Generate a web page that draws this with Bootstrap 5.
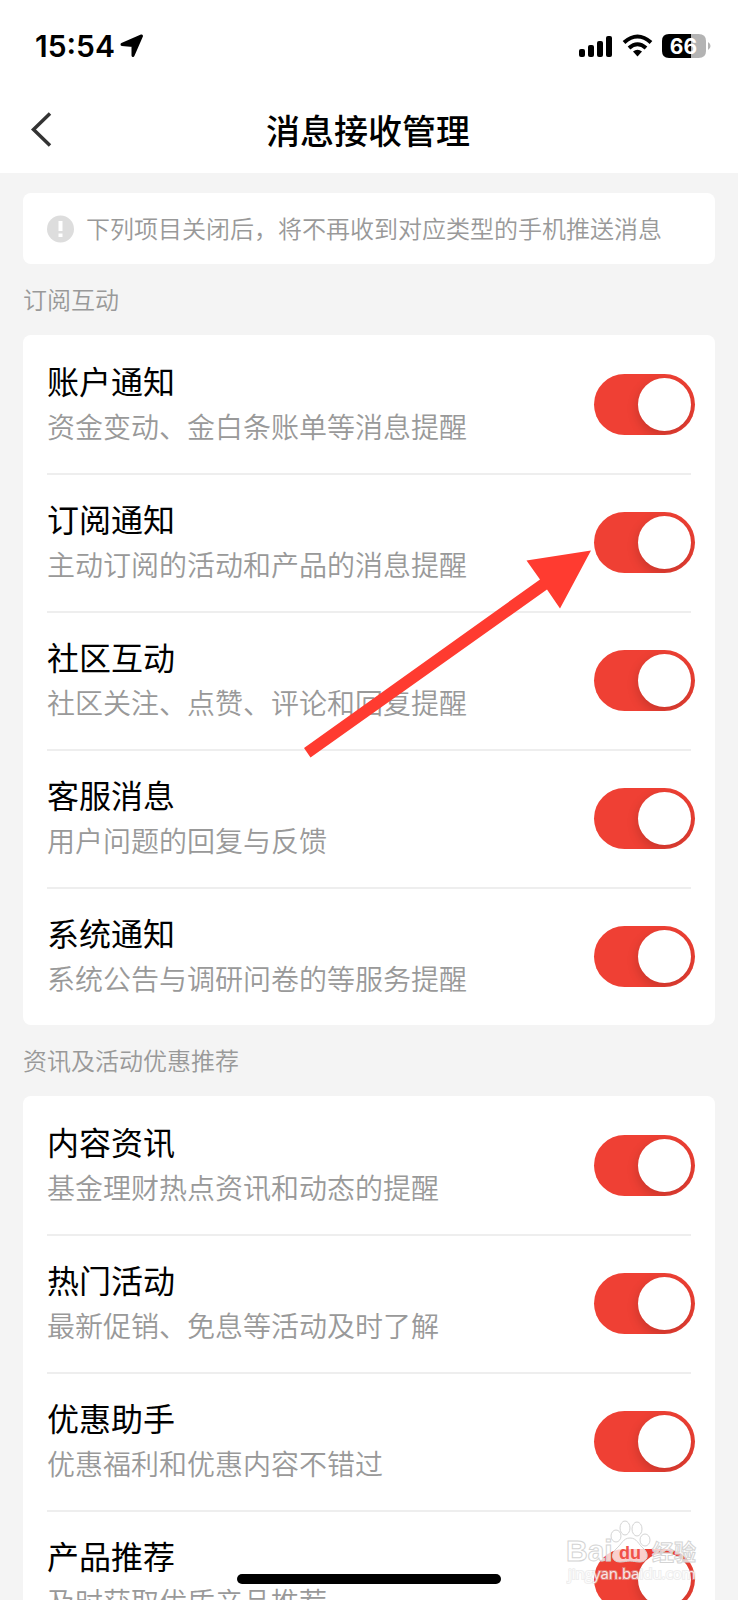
<!DOCTYPE html>
<html lang="zh-CN">
<head>
<meta charset="utf-8">
<meta name="viewport" content="width=device-width, initial-scale=1">
<title>消息接收管理</title>
<link href="https://cdn.jsdelivr.net/npm/bootstrap@5.3.0/dist/css/bootstrap.min.css" rel="stylesheet">
<style>
  body { font-family: "Noto Sans CJK SC", sans-serif; background: #f4f4f4; color: #000; }
  .status-bar { height: 88px; padding: 3px 27px 0 35px; font-family: Inter, sans-serif; font-weight: 600; }
  .clock { font-size: 30px; line-height: 32px; }
  .nav-row { height: 85px; padding: 0 29px 2px; }
  .nav-heading { font-size: 34px; line-height: 83px; font-weight: 500; }
  .nav-spacer { width: 28px; }
  .settings-scroll { padding: 20px 23px 0; min-height: 0; overflow-y: auto; scrollbar-width: none; }
  .settings-scroll::-webkit-scrollbar { display: none; }
  .panel { background: #fff; border-radius: 8px; }
  .hint { min-height: 71px; padding: 0 24px; font-size: 24px; line-height: 32px; color: #999; }
  .hint span { padding-bottom: 2px; }
  .group-label { font-size: 24px; line-height: 69px; padding-bottom: 2px; color: #999; }
  .setting { min-height: 138px; margin: 0 24px; }
  .setting + .setting { border-top: 2px solid #eee; padding-bottom: 2px; }
  .setting label { padding-bottom: 2px; }
  .setting-name { font-size: 32px; line-height: 46px; }
  .setting-note { font-size: 28px; line-height: 46px; color: #999; }
  .hint, .group-label, .setting-note { font-weight: 350; }
  .form-check-input.toggle { width: 101px; height: 61px; margin: 0 -4px 0 0; border: 0; border-radius: 31px; background: #ccc; overflow: hidden; position: relative; }
  .form-check-input.toggle:checked { background: #ef4034; }
  .toggle::before { content: ""; position: absolute; top: 4px; left: 4px; width: 53px; height: 53px; border-radius: 50%; background: #fff; box-shadow: 0 4px 12px rgba(0,0,0,.18); }
  .toggle:checked::before { left: auto; right: 4px; }
  .pointer-arrow { position: absolute; top: 215px; right: 124px; pointer-events: none; }
  .home-bar { position: absolute; bottom: 16px; left: 50%; width: 264px; height: 10px; margin-left: -132px; border-radius: 5px; background: #000; }
  .stamp { position: absolute; bottom: 10px; right: 34px; pointer-events: none; }
</style>
</head>
<body>
<div class="vh-100 d-flex flex-column position-relative overflow-hidden">
  <header class="bg-white flex-shrink-0">
    <div class="status-bar d-flex align-items-center justify-content-between">
      <div class="d-flex align-items-center">
        <span class="clock">15:54</span>
        <svg class="ms-1" width="26" height="26" viewBox="0 0 26 26" aria-hidden="true"><path d="M3 11.500 22.500 3 14 22.500V12.500Z" stroke="#000" stroke-width="3" stroke-linejoin="round"/></svg>
      </div>
      <svg width="132" height="26" viewBox="0 0 132 26" aria-hidden="true">
        <rect x="0" y="16" width="6" height="8" rx="2"/><rect x="9" y="12" width="6" height="12" rx="2"/><rect x="18" y="8" width="6" height="16" rx="2"/><rect x="27" y="3" width="6" height="21" rx="2"/>
        <g fill="none" stroke="#000" stroke-width="4"><path d="M45 9.500Q58.500-2.500 72 9.500"/><path d="M50 15Q58.500 7.500 67 15"/></g>
        <path d="M54 18.500Q58.500 15 63 18.500L58.500 23.500Z"/>
        <path d="M90 1H112V25H90Q83 25 83 18V8Q83 1 90 1Z"/><path d="M112 1h7.500Q127 1 127 8v10q0 7-7.500 7H112Z" fill="#b3b3b3"/><path d="M129 9q2.500 1.500 2.500 4t-2.500 4z" fill="#b3b3b3"/>
        <text x="104.500" y="20.500" text-anchor="middle" font-size="21" font-weight="700" fill="#fff">66</text>
      </svg>
    </div>
    <nav class="nav-row d-flex align-items-center justify-content-between" aria-label="页面导航">
      <button type="button" class="btn p-0 border-0" aria-label="返回"><svg class="d-block" width="26" height="36" viewBox="0 0 26 36"><path d="M21 1.500 4.500 17.500 21 33.500" fill="none" stroke="#333" stroke-width="3.500"/></svg></button>
      <h1 class="nav-heading m-0">消息接收管理</h1>
      <span class="nav-spacer"></span>
    </nav>
  </header>

  <main class="settings-scroll flex-grow-1">
    <div class="panel hint d-flex align-items-center">
      <svg class="flex-shrink-0 me-2" width="31" height="28" viewBox="0 0 31 28" aria-hidden="true"><circle cx="13.500" cy="14" r="13.500" fill="#ddd"/><path d="M13.500 6v10M13.500 18.500v3.500" stroke="#fff" stroke-width="4"/></svg>
      <span>下列项目关闭后，将不再收到对应类型的手机推送消息</span>
    </div>

    <h2 class="group-label m-0">订阅互动</h2>
    <section class="panel position-relative">
      <div class="setting d-flex align-items-center justify-content-between"><label for="s1"><span class="setting-name d-block">账户通知</span><span class="setting-note d-block">资金变动、金白条账单等消息提醒</span></label><input class="form-check-input toggle flex-shrink-0" type="checkbox" role="switch" id="s1" checked></div>
      <div class="setting d-flex align-items-center justify-content-between"><label for="s2"><span class="setting-name d-block">订阅通知</span><span class="setting-note d-block">主动订阅的活动和产品的消息提醒</span></label><input class="form-check-input toggle flex-shrink-0" type="checkbox" role="switch" id="s2" checked></div>
      <div class="setting d-flex align-items-center justify-content-between"><label for="s3"><span class="setting-name d-block">社区互动</span><span class="setting-note d-block">社区关注、点赞、评论和回复提醒</span></label><input class="form-check-input toggle flex-shrink-0" type="checkbox" role="switch" id="s3" checked></div>
      <div class="setting d-flex align-items-center justify-content-between"><label for="s4"><span class="setting-name d-block">客服消息</span><span class="setting-note d-block">用户问题的回复与反馈</span></label><input class="form-check-input toggle flex-shrink-0" type="checkbox" role="switch" id="s4" checked></div>
      <div class="setting d-flex align-items-center justify-content-between"><label for="s5"><span class="setting-name d-block">系统通知</span><span class="setting-note d-block">系统公告与调研问卷的等服务提醒</span></label><input class="form-check-input toggle flex-shrink-0" type="checkbox" role="switch" id="s5" checked></div>
      <svg class="pointer-arrow" width="287" height="208" viewBox="0 0 287 208" aria-hidden="true"><path d="M0 198 236 29.500 222.500 10.500 287 .5 256 58.500 243 39.500 6.500 207.500Z" fill="#ff3b30"/></svg>
    </section>

    <h2 class="group-label m-0">资讯及活动优惠推荐</h2>
    <section class="panel">
      <div class="setting d-flex align-items-center justify-content-between"><label for="s6"><span class="setting-name d-block">内容资讯</span><span class="setting-note d-block">基金理财热点资讯和动态的提醒</span></label><input class="form-check-input toggle flex-shrink-0" type="checkbox" role="switch" id="s6" checked></div>
      <div class="setting d-flex align-items-center justify-content-between"><label for="s7"><span class="setting-name d-block">热门活动</span><span class="setting-note d-block">最新促销、免息等活动及时了解</span></label><input class="form-check-input toggle flex-shrink-0" type="checkbox" role="switch" id="s7" checked></div>
      <div class="setting d-flex align-items-center justify-content-between"><label for="s8"><span class="setting-name d-block">优惠助手</span><span class="setting-note d-block">优惠福利和优惠内容不错过</span></label><input class="form-check-input toggle flex-shrink-0" type="checkbox" role="switch" id="s8" checked></div>
      <div class="setting d-flex align-items-center justify-content-between"><label for="s9"><span class="setting-name d-block">产品推荐</span><span class="setting-note d-block">及时获取优质产品推荐</span></label><input class="form-check-input toggle flex-shrink-0" type="checkbox" role="switch" id="s9" checked></div>
    </section>
  </main>

  <svg class="stamp" width="138" height="76" viewBox="0 0 138 76" aria-hidden="true">
    <g fill="#fff" fill-opacity=".75" stroke="#d4d4d4" stroke-width="1">
      <ellipse cx="50" cy="22" rx="5" ry="6"/><ellipse cx="59" cy="14" rx="5" ry="7"/><ellipse cx="71" cy="15" rx="5" ry="7"/><ellipse cx="79" cy="26" rx="5" ry="6"/>
      <path d="M64 24c7 0 8 6 14 11 6 6 3 13-4 13-4 0-7-1-10-1s-6 1-10 1c-8 0-10-7-4-13 6-5 7-11 14-11z"/>
      <text x="0" y="47" font-size="30" font-weight="700" font-family="Liberation Sans, Arial, sans-serif">Bai</text>
      <text x="86" y="46" font-size="22" font-weight="700" font-family="Noto Sans CJK SC, sans-serif">经验</text>
    </g>
    <text x="53" y="45" font-size="18" font-weight="700" font-family="Liberation Sans, Arial, sans-serif" fill="#ef4034" fill-opacity=".9">du</text>
    <text x="2" y="65" font-size="15" font-family="Open Sans, sans-serif" fill="#fff" fill-opacity=".85" stroke="#d4d4d4" stroke-width="2" stroke-opacity=".4" paint-order="stroke">jingyan.baidu.com</text>
  </svg>
  <div class="home-bar"></div>
</div>
<script src="https://cdn.jsdelivr.net/npm/bootstrap@5.3.0/dist/js/bootstrap.bundle.min.js"></script>
</body>
</html>
